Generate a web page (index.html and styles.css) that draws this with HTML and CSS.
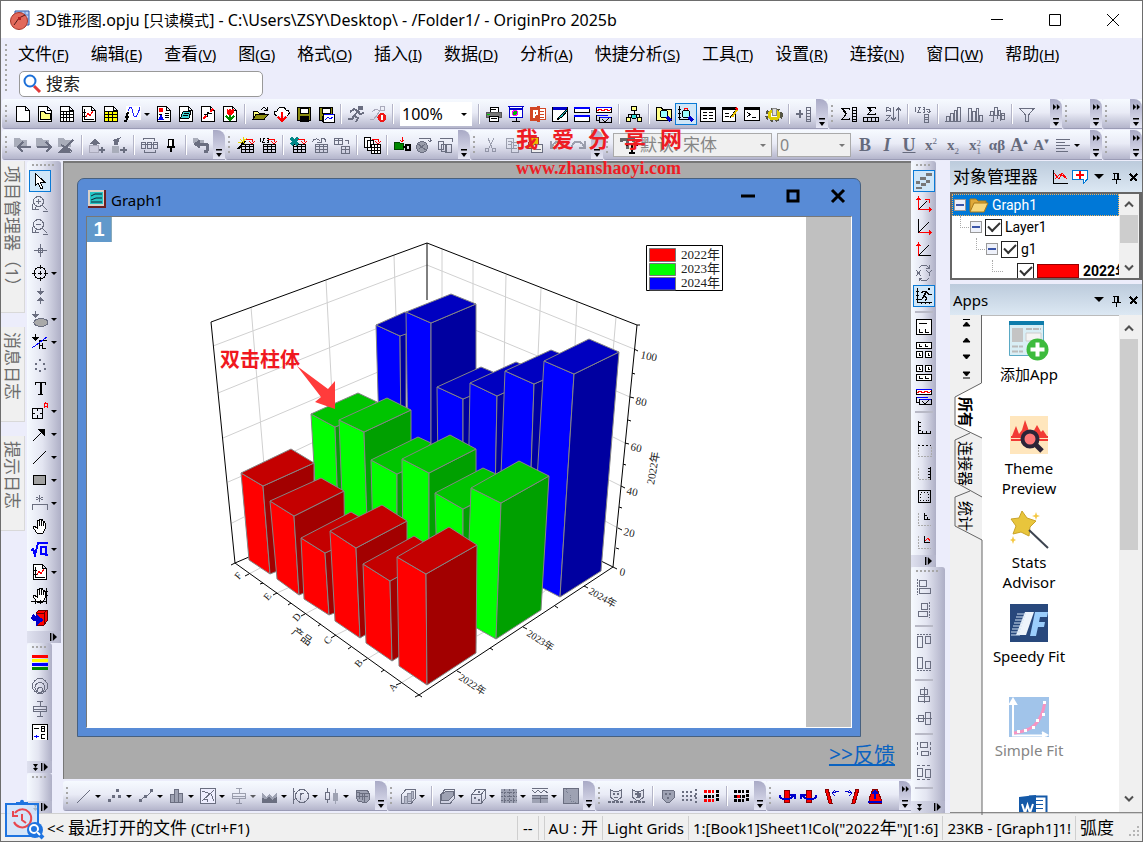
FILE: index.html
```html
<!DOCTYPE html>
<html lang="zh-CN">
<head>
<meta charset="utf-8">
<title>3D锥形图.opju - OriginPro 2025b</title>
<link rel="stylesheet" href="styles.css">
</head>
<body>
<svg class="defs" aria-hidden="true">
<defs>
<symbol id="pg" viewBox="0 0 18 18"><path d="M2.500 1.500H11.500L15.500 5.500V16.500H2.500ZM11.500 1.500V5.500H15.500" fill="#fff"/></symbol>
<symbol id="openp" viewBox="0 0 18 18"><use href="#pg"/><path d="M4.500 14.500V6.500H8.500L9.500 8.500H14.500V14.500Z" fill="#ffff80"/></symbol>
<symbol id="book" viewBox="0 0 18 18"><use href="#pg"/><path d="M2.500 6.500H15.500M2.500 9.500H15.500M2.500 12.500H15.500M5.500 6.500V16M8.500 6.500V16M11.500 6.500V16"/></symbol>
<symbol id="graph" viewBox="0 0 18 18"><use href="#pg"/><path d="M4.500 4V14.500H14M3 7.500H6M3 11.500H6"/><path d="M6 12L8 8L10 11L13 6" stroke="#f00"/></symbol>
<symbol id="matrix" viewBox="0 0 18 18"><use href="#pg"/><path d="M2.500 6.500H15.500V16.500H2.500Z" fill="#ff0"/><path d="M2.500 9.500H15.500M2.500 12.500H15.500M6.500 6.500V16M10.500 6.500V16"/></symbol>
<symbol id="fx" viewBox="0 0 18 18"><path d="M2 1H17V15H2Z" fill="#fff" stroke="none"/><path d="M4 6C6 0 8 2 9 8S13 14 16 2" stroke="#22f"/><path d="M5 8C3 7 3 9 3 11S3 17 0 16M1 11.500H5" stroke-width="2"/></symbol>
<symbol id="layout" viewBox="0 0 18 18"><use href="#pg"/><path d="M4 3H8V7H4Z" fill="#f00" stroke="none"/><path d="M4 14L6 10L8 14Z" fill="#00f" stroke="#00f"/><path d="M10 8.500H14M10 10.500H14M10 12.500H14M4 9.500H7"/></symbol>
<symbol id="notes" viewBox="0 0 18 18"><use href="#pg"/><path d="M6 7L14 6L12 13L3 14Z" fill="#3fd4d4"/><path d="M7 9L12 8M6 11L11 10"/></symbol>
<symbol id="pline" viewBox="0 0 18 18"><use href="#pg"/><path d="M4 14L7 11M11 7L14 4" stroke="#f00" stroke-width="2"/><path d="M5 10L8 9L13 8M8 12V7L11 9"/></symbol>
<symbol id="pflow" viewBox="0 0 18 18"><use href="#pg"/><path d="M6 4L7 6L9 4L11 6L12 4V8L9 10L6 8Z" fill="#f00" stroke="#f00"/><path d="M5 11L9 15L13 11M9 10V15" stroke="#080" stroke-width="2"/></symbol>
<symbol id="folder" viewBox="0 0 18 18"><path d="M2 14V6H6L8 8H13V10" fill="#ffff80"/><path d="M2 14.500L5 9.500H17L13 14.500Z" fill="#8c8c10"/><path d="M10 5C12 2 14 2 16 5M16 2V5H13"/></symbol>
<symbol id="cloud" viewBox="0 0 18 18"><path d="M4 10.500C0 10 0 6 4 6C5 1 12 1 13 5C17 5 17 10 14 10.500" fill="#fff"/><path d="M9 7V15M5 12L9 16L13 12" stroke="#f00" stroke-width="2"/></symbol>
<symbol id="save" viewBox="0 0 18 18"><path d="M2.500 2.500H15.500V15.500H2.500Z" fill="#8c8c10"/><path d="M5 3H13V8H5Z" fill="#fff"/><path d="M5 11H13V16H5Z" fill="#000"/></symbol>
<symbol id="savet" viewBox="0 0 18 18"><use href="#save"/><path d="M6.500 9.500H17.500V17.500H6.500Z" fill="#fff"/><path d="M7 9.500H17" stroke="#00f"/><path d="M8 15L11 12L13 14L16 12" stroke="#00f"/></symbol>
<symbol id="run" viewBox="0 0 18 18"><path d="M3 7L7 4L11 6L7 11L11 13L9 17M11 6L13 9L17 8M7 11L5 14L1 14" stroke-width="2"/><path d="M11 1H15V4H11Z" fill="currentColor"/></symbol>
<symbol id="runx" viewBox="0 0 18 18"><path d="M3 7L7 4L11 6L7 11L10 12M7 11L5 14L1 14M11 1H15V5H11Z" stroke="#aab"/><circle cx="13" cy="12.500" r="4.500" fill="#f01818" stroke="none"/><path d="M13 10V15" stroke="#fff" stroke-width="2"/></symbol>
<symbol id="print" viewBox="0 0 18 18"><path d="M5 7V2H13V7" fill="#fff"/><path d="M1.500 7.500H16.500V12.500H1.500Z" fill="#777" stroke="#555"/><path d="M4.500 11.500H13.500V16.500H4.500Z" fill="#fff"/><path d="M6 4.500H11M6 13.500H12"/><path d="M2 9H5" stroke="#0c0"/></symbol>
<symbol id="slide" viewBox="0 0 18 18"><path d="M1 1.500H17M2.500 2V12.500H15.500V2" stroke="#00c" fill="#fff"/><path d="M2 3.500H16" stroke="#00c" stroke-width="2"/><circle cx="8" cy="8" r="2.500" fill="#0b0" stroke="#f0f"/><path d="M9 13V16M5 16.500H13"/></symbol>
<symbol id="ppt" viewBox="0 0 18 18"><path d="M9 3.500H16.500V14.500H9M11 6H15M11 9H15M11 12H15" fill="#fff" stroke="#d24625"/><path d="M1 2.500L11 1V17L1 15.500Z" fill="#d24625" stroke="none"/><path d="M4.500 13V5.500H6.500C9 5.500 9 9.500 6.500 9.500H5" stroke="#fff" stroke-width="2"/></symbol>
<symbol id="brush" viewBox="0 0 18 18"><path d="M1.500 2.500H16.500V16.500H1.500Z" fill="#fff"/><path d="M2 3H16" stroke="#00c" stroke-width="3"/><path d="M16 4L9 11L6 15L11 12L17 5Z" fill="#2bb"/></symbol>
<symbol id="win2" viewBox="0 0 18 18"><path d="M1.500 2.500H16.500V7.500H1.500ZM1.500 10.500H16.500V16.500H1.500Z" fill="#fff"/><path d="M1 3H17M1 11H17" stroke="#00f" stroke-width="2"/></symbol>
<symbol id="win3" viewBox="0 0 18 18"><path d="M1.500 2.500H16.500V7.500H1.500Z" fill="#fff"/><path d="M1 2H17M1 10H13M5 12.500H17" stroke="#00f"/><path d="M2 6L5 4L8 6L11 4L14 6L16 4" stroke="#f00"/><path d="M1.500 10V15H5M4.500 12V17.500H16.500V12M7 14L10 17L14 13"/></symbol>
<symbol id="org" viewBox="0 0 18 18"><path d="M6.500 1.500H11.500V5.500H6.500ZM1.500 12.500H5.500V16.500H1.500ZM12.500 12.500H16.500V16.500H12.500Z" fill="#ff8"/><path d="M9 6V12M3.500 12V9.500H14.500V12"/><circle cx="9" cy="11.500" r="2.500" fill="#3dd"/></symbol>
<symbol id="lens" viewBox="0 0 18 18"><circle cx="9" cy="9" r="4" fill="#9ff"/><path d="M12 12L16 16" stroke="#00c" stroke-width="3"/></symbol>
<symbol id="find" viewBox="0 0 18 18"><path d="M1.500 15.500V2.500H6L8 4.500H16.500V15.500Z" fill="#ff8"/><use href="#lens"/></symbol>
<symbol id="gfind" viewBox="0 0 18 18"><path d="M2.500 1V14.500H12M1 4.500H4M1 8.500H4M1 12.500H4"/><path d="M5 12L8 3L10 3L12 7" stroke="#f00"/><use href="#lens"/></symbol>
<symbol id="rep" viewBox="0 0 18 18"><path d="M1.500 2.500H16.500V16.500H1.500Z" fill="#fff"/><path d="M1 4H17" stroke-width="2"/><path d="M4 7.500H8M4 10.500H8M4 13.500H8M10 7.500H14M10 10.500H14M10 13.500H14"/></symbol>
<symbol id="repe" viewBox="0 0 18 18"><path d="M1.500 2.500H14.500V16.500H1.500Z" fill="#fff"/><path d="M1 4H15" stroke-width="2"/><path d="M4 8.500H8M4 11.500H8M15 5L9 13"/><path d="M16 5L11 12" stroke="#e8c000" stroke-width="2"/><path d="M15 3L17 5" stroke="#f00" stroke-width="2"/></symbol>
<symbol id="cmd" viewBox="0 0 18 18"><path d="M1.500 2.500H16.500V15.500H1.500Z" fill="#fff"/><path d="M1 4H17" stroke-width="2"/><path d="M4 7L7 9.500L4 12M9 12.500H13"/></symbol>
<symbol id="gear" viewBox="0 0 18 18"><ellipse cx="9" cy="10" rx="7" ry="5" stroke-width="4" stroke="#554" stroke-dasharray="3 2"/><ellipse cx="9" cy="10" rx="5" ry="4" fill="#fff" stroke="#dc0" stroke-width="3"/><path d="M7 3H11V10H7Z" fill="#ddd" stroke="#888"/></symbol>
<symbol id="addc" viewBox="0 0 18 18"><path d="M1 9H8M4.500 5V13" stroke-width="2"/><path d="M11.500 2.500H15.500V16.500H11.500ZM11.500 5.500H15.500M11.500 8.500H15.500M11.500 11.500H15.500M11.500 14H15.500"/></symbol>
<symbol id="sumc" viewBox="0 0 18 18"><path d="M9 5V3.500H2L6 9L2 14.500H9V13"/><path d="M3 4L6 9" stroke-width="2"/><path d="M12.500 2.500H16.500V16.500H12.500ZM12.500 5.500H16.500M12.500 8.500H16.500M12.500 11.500H16.500M12.500 14H16.500"/></symbol>
<symbol id="sumr" viewBox="0 0 18 18"><path d="M13 4V2.500H6L9 6L6 9.500H13V8"/><path d="M7 3L9 6" stroke-width="2"/><path d="M1.500 12.500H16.500V16.500H1.500ZM5 12.500V16M9 12.500V16M13 12.500V16"/></symbol>
<symbol id="sort" viewBox="0 0 18 18"><path d="M2 7V3.500L4 2L6 3.500V7M2 5.500H6M2 10.500H6L2 15.500H6"/><path d="M9.500 2V15M7 12L9.500 15.500L12 12M14.500 16V3M12 6L14.500 2.500L17 6"/></symbol>
<symbol id="n123" viewBox="0 0 18 18"><path d="M1.500 2V7M4 2.500H6L4 7H6.500M8.500 2.500H10.500V7H8.500M8.500 4.500H10M12 4.500H15V7M13 6L15 8L17 6"/><path d="M10.500 9.500H14.500V17H10.500ZM10.500 12H14.500M10.500 14.500H14.500"/></symbol>
<symbol id="h1" viewBox="0 0 18 18"><path d="M1 16.500H17M2.500 16V11.500H5.500V16M6.500 16V8.500H9V16M10.500 16V5.500H12.500V16M13.500 16V2.500H16.500V16"/></symbol>
<symbol id="h2" viewBox="0 0 18 18"><path d="M1 16.500H17M2.500 16V3.500H5.500V16M6.500 16V6.500H9V16M10.500 16V3.500H12.500V16M13.500 16V10.500H16.500V16"/></symbol>
<symbol id="h3" viewBox="0 0 18 18"><path d="M1 10.500H17M2.500 10V6.500H5V16H3M6.500 10V2.500H9V14M10.500 10V5.500H12.500V16M13.500 8.500H16.500V14H13.500V8"/></symbol>
<symbol id="filt" viewBox="0 0 18 18"><path d="M2 3.500H16L10.500 10V16H7.500V10Z"/></symbol>
<symbol id="fl" viewBox="0 0 18 18"><path d="M0 2H6L7 4H13V11H0Z" fill="#a9adba" stroke="none"/><path d="M17 11H5M9 6L4 11L9 16" stroke-width="2"/></symbol>
<symbol id="fr" viewBox="0 0 18 18"><path d="M0 2H6L7 4H13V11H0Z" fill="#a9adba" stroke="none"/><path d="M1 11H14M10 6L15 11L10 16" stroke-width="2"/></symbol>
<symbol id="fu" viewBox="0 0 18 18"><path d="M0 2H6L7 4H13V11H0Z" fill="#a9adba" stroke="none"/><path d="M3 9L14 15M15 4L5 14" stroke-width="2"/><path d="M1 16H12L7 11Z" fill="currentColor"/></symbol>
<symbol id="up" viewBox="0 0 18 18"><path d="M2 8L7 2L12 8H9V9H5V8Z" fill="currentColor" stroke="none"/><path d="M1.500 9.500H10.500V16.500H1.500Z" fill="#ccd" stroke="#aab"/><path d="M11 14H17M14 11V17" stroke-width="2"/></symbol>
<symbol id="dn" viewBox="0 0 18 18"><path d="M3 4L11 1L9 4L8 9H4V6Z" fill="currentColor" stroke="none"/><path d="M2 10H9V17H2Z" fill="#a9adba" stroke="none"/><path d="M10 14H17M13.500 11V17" stroke-width="2"/></symbol>
<symbol id="cyc" viewBox="0 0 18 18"><path d="M1.500 6.500H5.500V12.500H1.500ZM7.500 6.500H11.500V12.500H7.500ZM13.500 6.500H17V12.500H13.500ZM1 8.500H17M3 4V2.500H14V5M15 14V16.500H4V14"/></symbol>
<symbol id="pin" viewBox="0 0 18 18"><path d="M6.500 3.500H11.500V10H6.500Z" fill="#fff"/><path d="M11 3V10M5 10.500H13M9 11V16" stroke-width="2"/></symbol>
<symbol id="back" viewBox="0 0 18 18"><path d="M1 2H6L7 4H12V7H1Z" fill="#a9adba" stroke="none"/><path d="M5 8H13Q16 8 16 12T12 16M8 5L4 8L8 11" stroke-width="3"/></symbol>
<symbol id="tbl" viewBox="0 0 18 18"><path d="M4.500 8.500H16.500V16.500H4.500ZM4 10.500H17M4 13.500H17M8.500 8V17M12.500 8V17"/></symbol>
<symbol id="ra" viewBox="0 0 18 18"><path d="M9 3.500H15V6M12 5L15 8L18 5" stroke="#f00"/></symbol>
<symbol id="wiz" viewBox="0 0 18 18"><path d="M1 13L8 5" stroke-width="2"/><path d="M3 3L8 8M10 2L4 7M6 1V5M1 6H5" stroke="#e6d800"/><use href="#tbl"/><use href="#ra"/></symbol>
<symbol id="imp" viewBox="0 0 18 18"><path d="M1.500 2V6M3.500 2.500H5.500L3.500 6H6M7.500 2.500H9.500V6H7.500M8 4H9"/><use href="#tbl"/><use href="#ra"/></symbol>
<symbol id="xls" viewBox="0 0 18 18"><use href="#tbl"/><path d="M2 2L9 9M9 2L2 9" stroke="#088" stroke-width="3"/><use href="#ra"/></symbol>
<symbol id="rei" viewBox="0 0 18 18"><use href="#tbl"/><path d="M1 6C3 2 7 2 9 5M6 6H10V3M10 3C13 2 15 3 15 6"/></symbol>
<symbol id="rej" viewBox="0 0 18 18"><path d="M1.500 2.500H9.500V8.500H1.500ZM1 4.500H10M5.500 2V8M12 4.500H15V8M8.500 10.500H16.500V17H8.500ZM8 13.500H17M12.500 10V17"/></symbol>
<symbol id="dup" viewBox="0 0 18 18"><path d="M1.500 1.500H7.500V11.500H1.500ZM4.500 4.500H10.500V14H4.500Z" fill="#fff"/><path d="M8.500 8.500H17V17H8.500ZM8 11.500H17M8 14.500H17M11.500 8V17M14.500 8V17" fill="#fff"/><use href="#ra"/></symbol>
<symbol id="plug" viewBox="0 0 18 18"><path d="M1 6H6L7 7H10V13H1Z" fill="#080" stroke="#040"/><path d="M9 1V6M7 4L9 6L11 4" stroke="#f00"/><path d="M10 11H13V9H17V14H13V12" stroke-width="2"/></symbol>
<symbol id="conn" viewBox="0 0 18 18"><circle cx="7" cy="11" r="5.500" fill="#999dab"/><path d="M3 8L11 14M4 13L10 8M4 2.500H15V6M13 4L15 6L17 4"/></symbol>
<symbol id="cpy" viewBox="0 0 18 18"><path d="M1.500 5.500H6.500V13H1.500ZM4.500 8.500H9.500V15H4.500ZM8.500 8.500H14V16.500H8.500ZM3 2.500H15V6"/></symbol>
<symbol id="cut" viewBox="0 0 18 18"><path d="M6 2L10 12M12 2L7 12"/><circle cx="5" cy="14" r="2"/><circle cx="12" cy="14" r="2"/></symbol>
<symbol id="cp2" viewBox="0 0 18 18"><path d="M2.500 2.500H9.500V12.500H2.500ZM7.500 6.500H14.500V16.500H7.500ZM4 5.500H8M4 8.500H7M9 9.500H13M9 12.500H13" fill="#dfe2ee"/></symbol>
<symbol id="pst" viewBox="0 0 18 18"><path d="M4 1L12 1L13 12H2Z" fill="#e8c000" stroke="#a33"/><path d="M5 13L9 8H16V16H5Z" fill="#eee"/><path d="M8 13.500H15"/></symbol>
<symbol id="redo" viewBox="0 0 18 18"><path d="M2 12C2 4 12 4 14 11M15 5V12H9" stroke-width="2"/></symbol>
<symbol id="undo" viewBox="0 0 18 18"><path d="M16 12C16 4 6 4 4 11M3 5V12H9" stroke-width="2"/></symbol>
<symbol id="tf" viewBox="0 0 18 18"><path d="M1 6V3H13V6M7 3V13" stroke-width="3" stroke="#666"/><path d="M7 10V7.500H17V10M12 8V17M9 17H15" stroke-width="2"/></symbol>
<symbol id="aln" viewBox="0 0 18 18"><path d="M2 3.500H16M2 6.500H11M2 9.500H16M2 12.500H11M2 15.500H14"/></symbol>
<symbol id="arrow" viewBox="0 0 18 18"><path d="M4 1V14L7 11L10 17L12 16L9.500 10.500H14Z" fill="#fff"/></symbol>
<symbol id="zin" viewBox="0 0 18 18"><circle cx="7.500" cy="6.500" r="5"/><path d="M5 6.500H10M7.500 4V9M11 10L16 15M1.500 9V14.500H8M4 12V14M12 16.500H17"/></symbol>
<symbol id="zout" viewBox="0 0 18 18"><circle cx="7.500" cy="6.500" r="5"/><path d="M5 6.500H10M11 10L16 15M1.500 9V14.500H8M4 12V14M12 16.500H17"/></symbol>
<symbol id="plus" viewBox="0 0 18 18"><path d="M9.500 3V16M3 9.500H16M7.500 7.500H11.500V11.500H7.500Z"/></symbol>
<symbol id="target" viewBox="0 0 18 18"><circle cx="9" cy="9" r="6"/><path d="M9 1V5M9 13V17M1 9H5M13 9H17M7 9H11M9 7V11"/></symbol>
<symbol id="ud" viewBox="0 0 18 18"><path d="M9.500 1V5M9.500 13V17"/><path d="M6 4H13L9.500 8ZM6 14H13L9.500 10Z" fill="currentColor" stroke="none"/></symbol>
<symbol id="mask" viewBox="0 0 18 18"><ellipse cx="10" cy="12.500" rx="7" ry="4" fill="#a9a9a9"/><path d="M4.500 1V5" /><path d="M1 4H8L4.500 8Z" fill="currentColor" stroke="none"/></symbol>
<symbol id="draw" viewBox="0 0 18 18"><path d="M4.500 1V5"/><path d="M1 4H8L4.500 8Z" fill="#000" stroke="none"/><path d="M8.500 16V7.500H16M11.500 10V15.500H15M8 12.500H11"/><path d="M1 15L16 4" stroke="#00f"/></symbol>
<symbol id="dots" viewBox="0 0 18 18"><path d="M8 3H10V5H8ZM4 7H6V9H4ZM12 7H14V9H12ZM4 12H6V14H4ZM8 14H10V16H8ZM13 12H15V14H13Z" fill="currentColor" stroke="none"/></symbol>
<symbol id="tt" viewBox="0 0 18 18"><path d="M4.500 6V3.500H14.500V6M7 15.500H12"/><path d="M9.500 3V16" stroke-width="2"/></symbol>
<symbol id="ann" viewBox="0 0 18 18"><path d="M1.500 6.500H11.500V16.500H1.500ZM6.500 6V9M6.500 13V17M1 11.500H4M9 11.500H12"/><path d="M13.500 6V2L14.500 1L16.500 2V6M13 4.500H16" stroke="#f00"/></symbol>
<symbol id="arr" viewBox="0 0 18 18"><path d="M2 16L11 7"/><path d="M13 4V10L7 4Z" fill="#000"/></symbol>
<symbol id="line" viewBox="0 0 18 18"><path d="M2 16L15 3"/></symbol>
<symbol id="rect" viewBox="0 0 18 18"><path d="M2.500 4.500H14.500V13.500H2.500Z" fill="#a0a0a0"/></symbol>
<symbol id="brk" viewBox="0 0 18 18"><path d="M1.500 16V10.500H16.500V16M8.500 1V8M5 3L12 6M12 3L5 6"/></symbol>
<symbol id="hand" viewBox="0 0 18 18"><path d="M5 15L2 10L3 9L6 11V4Q7 3 8 4V9V3Q9 1 10 3V9V3Q12 2 12 4V9V5Q14 4 14 6V12L12 16H6Z" fill="#fff"/></symbol>
<symbol id="sqrt" viewBox="0 0 18 18"><path d="M0 10L2 9L4 15L7 3H17M15 7H10V14H14M15 6V15H17" stroke="#00f" stroke-width="2"/></symbol>
<symbol id="hand2" viewBox="0 0 18 18"><use href="#hand"/><path d="M0 15.500H16M15.500 2V18M4 14V18M9 14V18M14 5.500H17M14 9.500H17"/></symbol>
<symbol id="rot" viewBox="0 0 18 18"><path d="M5 4L8 1H16V12L13 16H5Z" fill="#f00" stroke="#600"/><path d="M5 4H13V16M13 4L16 1" stroke="#600"/><path d="M3 6C-1 10 3 12 8 11M6 7L11 11L6 15Z" stroke="#00c" fill="#00c" stroke-width="2"/></symbol>
<symbol id="cols" viewBox="0 0 18 18"><path d="M1 2.500H17" stroke="#f00" stroke-width="3"/><path d="M1 6.500H17" stroke="#ff0" stroke-width="3"/><path d="M1 10.500H17" stroke="#00f" stroke-width="3"/><path d="M1 14.500H17" stroke="#080" stroke-width="3"/></symbol>
<symbol id="rings" viewBox="0 0 18 18"><circle cx="9" cy="9" r="7.500"/><circle cx="9" cy="10.500" r="5"/><circle cx="9" cy="13" r="2.500"/></symbol>
<symbol id="err" viewBox="0 0 18 18"><path d="M6 1.500H12M9 2V6M2.500 6.500H15.500V11.500H2.500ZM2 9.500H16M9 12V16M6 16.500H12"/></symbol>
<symbol id="lbl" viewBox="0 0 18 18"><path d="M1.500 17V1.500H16.500V17" fill="#fff"/><path d="M3 5.500H8M10.500 3V8.500H13.500V3.500H10.500M10.500 5.500H13M14 11.500H10.500V15.500H14"/><path d="M3 13.500H8M5.500 12V15" stroke="#00f"/></symbol>
<symbol id="steps" viewBox="0 0 18 18"><path d="M1 9H5V12H1ZM5 5H11V8H5ZM11 1H17V4H11ZM11 8H15V11H11ZM6 11H11V14H6ZM1 15H7V17H1Z" fill="#777" stroke="none"/></symbol>
<symbol id="ax1" viewBox="0 0 18 18"><path d="M4 14L12 6"/><path d="M3.500 3V14.500H15M10 4H14V8" stroke="#f00"/><path d="M1 5L3.500 1L6 5ZM14 12V17L17 14.500Z" fill="#f00" stroke="none"/></symbol>
<symbol id="ax2" viewBox="0 0 18 18"><path d="M3.500 1V14.500M3.500 14.500L14 4"/><path d="M4 14.500H15" stroke="#f00"/><path d="M14 12V17L17 14.500Z" stroke="none" fill="#f00"/></symbol>
<symbol id="ax3" viewBox="0 0 18 18"><path d="M3.500 14.500H16M3.500 14.500L14 4"/><path d="M3.500 15V2" stroke="#f00"/><path d="M1 5L3.500 1L6 5Z" stroke="none" fill="#f00"/></symbol>
<symbol id="xy" viewBox="0 0 18 18"><path d="M1 6L6 12M6 6L1 12M11 6L14 9L17 6M14 9V12M4 4C7 0 12 1 14 4M11 4H14V1M14 14C11 18 6 17 4 14M7 14H4V17"/></symbol>
<symbol id="jog" viewBox="0 0 18 18"><path d="M2.500 1V15.500H17M1 4.500H4M1 8.500H4M1 12.500H4M6 15V17M10 15V17M14 15V17"/><path d="M6 6L9 4L12 5L9 9L12 11L10 14M12 5L14 8L17 7M9 9L7 12H4"/><path d="M11 5L9 9M13 2H15" stroke-width="2"/></symbol>
<symbol id="l1" viewBox="0 0 18 18"><path d="M1.500 1.500H16.500V16.500H1.500Z" fill="#fff"/><path d="M4 5.500H12M4.500 11V14.500H8M10.500 11V14.500H14"/></symbol>
<symbol id="l2" viewBox="0 0 18 18"><path d="M1.500 1.500H16.500V7.500H1.500ZM1.500 10.500H7.500V16.500H1.500ZM10.500 10.500H16.500V16.500H10.500Z" fill="#fff"/><path d="M4.500 3V5.500H7M10.500 3V5.500H13M4.500 12V14.500H6M13.500 12V14.500H15"/></symbol>
<symbol id="l3" viewBox="0 0 18 18"><path d="M1.500 1.500H7.500V7.500H1.500ZM10.500 1.500H16.500V7.500H10.500ZM1.500 10.500H16.500V16.500H1.500Z" fill="#fff"/><path d="M4.500 3V5.500H6M13.500 3V5.500H15M4.500 12V14.500H8M10.500 12V14.500H14"/></symbol>
<symbol id="e1" viewBox="0 0 18 18"><path d="M3.500 3V15.500H16M3 4.500H6M3 8.500H6M3 12.500H6M7.500 13V15M11.500 13V15M15.500 13V15"/></symbol>
<symbol id="e2" viewBox="0 0 18 18"><path d="M3.500 3V15.500H16V5" stroke="#aaa" stroke-dasharray="2 1"/><path d="M3 4.500H16" stroke-dasharray="2 2"/></symbol>
<symbol id="e3" viewBox="0 0 18 18"><path d="M15 15.500H3.500V4" stroke="#aaa" stroke-dasharray="2 1"/><path d="M15.500 3V16M13 4.500H16M13 7.500H16M13 10.500H16M13 13.500H16"/></symbol>
<symbol id="e4" viewBox="0 0 18 18"><path d="M3.500 3.500H15.500V15.500H3.500Z"/><path d="M5.500 5.500H13.500V13.500H5.500Z" stroke-dasharray="1 2"/></symbol>
<symbol id="e5" viewBox="0 0 18 18"><path d="M3.500 3V15.500H16" stroke="#aaa" stroke-dasharray="2 1"/><path d="M9.500 3V9.500H15M9 5.500H12M12.500 7V10"/></symbol>
<symbol id="e6" viewBox="0 0 18 18"><path d="M3.500 3V15.500H16" stroke="#aaa" stroke-dasharray="2 1"/><path d="M9.500 3V9.500H15"/><path d="M10 8L13 5L15 8" stroke="#f00"/></symbol>
<symbol id="a1" viewBox="0 0 18 18"><path d="M2.500 1V17" stroke-dasharray="2 1"/><path d="M4.500 2.500H11.500V8.500H4.500ZM4.500 10.500H15.500V15.500H4.500Z"/></symbol>
<symbol id="a2" viewBox="0 0 18 18"><path d="M14.500 1V17" stroke-dasharray="2 1"/><path d="M6.500 2.500H12.500V8.500H6.500ZM3.500 10.500H12.500V15.500H3.500Z"/></symbol>
<symbol id="a3" viewBox="0 0 18 18"><path d="M2 2.500H16" stroke-dasharray="2 1"/><path d="M2.500 4.500H7.500V15.500H2.500ZM10.500 4.500H15.500V11.500H10.500Z"/></symbol>
<symbol id="a4" viewBox="0 0 18 18"><path d="M2 15.500H16" stroke-dasharray="2 1"/><path d="M2.500 2.500H7.500V13.500H2.500ZM10.500 6.500H15.500V13.500H10.500Z"/></symbol>
<symbol id="a5" viewBox="0 0 18 18"><path d="M9.500 1V17M5.500 3.500H12.500V8.500H5.500ZM3.500 10.500H14.500V15.500H3.500Z"/></symbol>
<symbol id="a6" viewBox="0 0 18 18"><path d="M1 9.500H17M3.500 6.500H8.500V12.500H3.500ZM10.500 3.500H15.500V15.500H10.500Z"/></symbol>
<symbol id="a7" viewBox="0 0 18 18"><path d="M2.500 2V16M15.500 2V16" stroke-dasharray="3 2"/><path d="M5.500 2.500H12.500V7.500H5.500ZM6.500 11.500H13.500V15.500H6.500Z"/></symbol>
<symbol id="a8" viewBox="0 0 18 18"><path d="M2 2.500H16M2 16.500H16" stroke-dasharray="3 2"/><path d="M2.500 5.500H7.500V13.500H2.500ZM10.500 6.500H15.500V14.500H10.500Z"/></symbol>
<symbol id="scat" viewBox="0 0 18 18"><path d="M2 12H5V15H2ZM6 8H9V11H6ZM12 8H15V11H12ZM10 2H13V5H10Z" fill="currentColor" stroke="none"/></symbol>
<symbol id="lsc" viewBox="0 0 18 18"><path d="M3 14L8 9H10L15 4"/><path d="M2 12H5V15H2ZM7 8H10V11H7ZM13 2H16V5H13Z" fill="currentColor" stroke="none"/></symbol>
<symbol id="bars" viewBox="0 0 18 18"><path d="M2.500 15.500V7.500H6.500V15.500ZM6.500 15.500V2.500H10.500V15.500ZM10.500 15.500V6.500H14.500V15.500Z" fill="#9ea2b3"/></symbol>
<symbol id="gx" viewBox="0 0 18 18"><path d="M1.500 1.500H16.500V16.500H1.500ZM3 14L15 3M3 4L12 7L15 14M5 12H8V15" fill="#eef"/></symbol>
<symbol id="area" viewBox="0 0 18 18"><path d="M1 6L5 10L8 7L11 10L16 5V15H1Z" fill="#9ea2b3" stroke="none"/><path d="M1 11L5 12L8 10L11 13L16 10V16H1Z" fill="currentColor" stroke="none"/></symbol>
<symbol id="pol" viewBox="0 0 18 18"><path d="M1.500 1V17M1 4.500H3M1 12.500H3"/><circle cx="10" cy="9" r="6.500"/><path d="M8.500 13V6M8.500 8L10 6.500H12"/></symbol>
<symbol id="box" viewBox="0 0 18 18"><path d="M4.500 1V5M4.500 12V16M2.500 5.500H6.500V12H2.500Z"/><path d="M12.500 2V6M12.500 13V17M10.500 6.500H14.500V13H10.500Z" fill="#9ea2b3" stroke="#9ea2b3"/></symbol>
<symbol id="cube" viewBox="0 0 18 18"><path d="M2.500 7.500L7 2.500H16.500V11.500L12 16.500H2.500Z"/><path d="M5 9H8V16H5ZM8 6H12V14H8ZM12 4H14V11H12Z" fill="#b4b8c8" stroke="#8a8ea0"/></symbol>
<symbol id="cubp" viewBox="0 0 18 18"><path d="M2.500 7.500L7 2.500H16.500V11.500L12 16.500H2.500ZM2.500 7.500H12V16M12 7.500L16 3"/><path d="M5 10H7V12H5ZM9 12H11V14H9ZM9 4H11V6H9Z" fill="currentColor" stroke="none"/></symbol>
<symbol id="cubf" viewBox="0 0 18 18"><path d="M2.500 7.500L7 2.500H16.500V11.500L12 16.500H2.500Z"/><path d="M3 8L8 4L16 4L15 9L11 13H3Z" fill="#9ea2b3"/></symbol>
<symbol id="film" viewBox="0 0 18 18"><path d="M2 3H13L15 6V13L12 16L4 14L2 10Z" fill="#9ea2b3"/><path d="M3 5L8 7V13M8 7L15 6M5 5V12M10 7V15M3 9H14"/></symbol>
<symbol id="mesh" viewBox="0 0 18 18"><path d="M1 2H17V16H1Z" fill="#9ea2b3" stroke="none"/><path d="M1 5.500H17M1 9.500H17M1 13.500H17M4.500 2V16M9.500 2V16M13.500 2V16" stroke-dasharray="2 1"/></symbol>
<symbol id="hm" viewBox="0 0 18 18"><path d="M1 1.500H17M1 3L4 6L7 3L10 6L13 3L17 6"/><path d="M1 8H17V16H1Z" fill="#9ea2b3" stroke="none"/><path d="M1 8.500H17M1 11.500H17M9 8V16"/></symbol>
<symbol id="cont" viewBox="0 0 18 18"><path d="M1.500 1.500H16.500V16.500H1.500Z" fill="#9ea2b3"/><path d="M4 2V5L8 8L9 14L15 16" stroke="#7a8093" stroke-dasharray="1 1"/></symbol>
<symbol id="msk" viewBox="0 0 18 18"><path d="M3.500 2.500L6 4H12L14.500 2.500V10L11 13H7L3.500 10Z" fill="#dfe1ec"/><path d="M6 7H8M10 7H12" stroke-width="2"/><path d="M7 10.500H11"/><path d="M1 15H17" stroke-width="2" stroke-dasharray="3 1"/></symbol>
<symbol id="msk2" viewBox="0 0 18 18"><use href="#msk"/><path d="M9 5V9H12" stroke-width="2"/></symbol>
<symbol id="shd" viewBox="0 0 18 18"><path d="M3 4L6 3H12L15 4V11L11 15H7L3 11Z" fill="#9ea2b3"/><path d="M6 7H8M10 7H12M8 11H10" stroke-width="2"/></symbol>
<symbol id="dgr" viewBox="0 0 18 18"><path d="M1 4.500H13M1 8.500H17M1 12.500H13" stroke-dasharray="2 2" stroke-width="2"/><path d="M15 2V16" stroke-dasharray="2 2" stroke-width="2"/></symbol>
<symbol id="dgr2" viewBox="0 0 18 18"><path d="M1 4.500H11M1 13.500H11" stroke="#f00" stroke-dasharray="3 1" stroke-width="3"/><path d="M1 9H11" stroke-dasharray="3 1" stroke-width="3"/><path d="M14.500 3V15" stroke-dasharray="3 1" stroke-width="3"/></symbol>
<symbol id="dgr3" viewBox="0 0 18 18"><path d="M1 4.500H11M1 9H13M1 13.500H11" stroke-dasharray="3 1" stroke-width="3"/><path d="M14.500 3V15" stroke-dasharray="3 1" stroke-width="3"/><path d="M4 9H7" stroke="#f00" stroke-width="3"/></symbol>
<symbol id="r1" viewBox="0 0 18 18"><path d="M6.500 3.500H11.500V15.500H6.500Z" fill="#f00" stroke="#800"/><path d="M2 8C0 13 12 14 15 9M12 8H17V12" stroke="#00c" stroke-width="2"/></symbol>
<symbol id="r2" viewBox="0 0 18 18"><path d="M6.500 3.500H11.500V15.500H6.500Z" fill="#f00" stroke="#800"/><path d="M16 8C18 13 6 14 3 9M6 8H1V12" stroke="#00c" stroke-width="2"/></symbol>
<symbol id="r3" viewBox="0 0 18 18"><path d="M3 2H6L10 16H7Z" fill="#f00" stroke="#800"/><path d="M17 4L10 6M13 3L10 6L13 9" stroke="#00c"/></symbol>
<symbol id="r4" viewBox="0 0 18 18"><path d="M12 2H15L11 16H8Z" fill="#f00" stroke="#800"/><path d="M1 4L8 6M5 3L8 6L5 9" stroke="#00c"/></symbol>
<symbol id="r5" viewBox="0 0 18 18"><path d="M7 2H11L15 12V16H3V12Z" fill="#f00" stroke="#800"/><path d="M9 4V12M6 7L9 4L12 7M2 15H16" stroke="#00c" stroke-width="2"/></symbol>
<symbol id="pn" viewBox="0 0 18 18"><path d="M6 5.500H12M7.500 6V11M5 11.500H14M9.500 12V16"/><path d="M11 5V11" stroke-width="2"/></symbol>
<symbol id="x" viewBox="0 0 18 18"><path d="M6 6L13 13M13 6L6 13" stroke-width="2"/></symbol>
<symbol id="chev" viewBox="0 0 18 18"><path d="M5 11.500L9 7.500L13 11.500" stroke="#505050" stroke-width="2"/></symbol>
</defs>
</svg>

<div class="app">
<header class="title">
  <svg class="logo" viewBox="0 0 20 20"><path d="M5 1H19V15H5Z" fill="#b9d0f5" stroke="#2c56a8"/><path d="M5 5H19M5 9H19M11 1V15M15 1V15" stroke="#5a80c8"/><circle cx="9" cy="11" r="8.500" fill="#e2695c" stroke="#a83228"/><path d="M4 15L9 8L15 5" fill="none" stroke="#501818"/><path d="M8 7H11V10H8Z" fill="#b02020"/></svg>
  <h1>3D<span>锥形图</span>.opju [<span>只读模式</span>] - C:\Users\ZSY\Desktop\ - /Folder1/ - OriginPro 2025b</h1>
  <div class="winbtns">
    <button aria-label="最小化"><svg viewBox="0 0 14 14"><path d="M1 6.500H13"/></svg></button>
    <button aria-label="最大化"><svg viewBox="0 0 14 14"><path d="M1.500 1.500H12.500V12.500H1.500Z"/></svg></button>
    <button aria-label="关闭"><svg viewBox="0 0 14 14"><path d="M1 1L13 13M13 1L1 13"/></svg></button>
  </div>
</header>

<div class="menuarea">
  <i class="grip v"></i>
  <div>
  <nav class="menu">
    <button>文件<small>(<u>F</u>)</small></button><button>编辑<small>(<u>E</u>)</small></button><button>查看<small>(<u>V</u>)</small></button><button>图<small>(<u>G</u>)</small></button><button>格式<small>(<u>O</u>)</small></button><button>插入<small>(<u>I</u>)</small></button><button>数据<small>(<u>D</u>)</small></button><button>分析<small>(<u>A</u>)</small></button><button>快捷分析<small>(<u>S</u>)</small></button><button>工具<small>(<u>T</u>)</small></button><button>设置<small>(<u>R</u>)</small></button><button>连接<small>(<u>N</u>)</small></button><button>窗口<small>(<u>W</u>)</small></button><button>帮助<small>(<u>H</u>)</small></button>
  </nav>
  <label class="search"><svg viewBox="0 0 20 20"><path d="M12 12L18 18" stroke="#e03a3a" stroke-width="3"/><circle cx="8" cy="7" r="5.500" fill="#fff" stroke="#1c6fd8" stroke-width="2"/></svg><input type="text" placeholder="搜索" aria-label="搜索"></label>
  </div>
</div>

<div class="row">
  <div class="bar"><i class="grip v"></i>
    <button class="b" title="新建项目"><svg><use href="#pg"/></svg></button><button class="b" title="新建文件夹"><svg><use href="#openp"/></svg></button><button class="b" title="新建工作簿"><svg><use href="#book"/></svg></button><button class="b" title="新建图"><svg><use href="#graph"/></svg></button><button class="b" title="新建矩阵"><svg><use href="#matrix"/></svg></button><button class="b dd" title="新建函数"><svg><use href="#fx"/></svg></button><button class="b" title="新建布局"><svg><use href="#layout"/></svg></button><button class="b" title="新建备注"><svg><use href="#notes"/></svg></button><button class="b" title="模板"><svg><use href="#pline"/></svg></button><button class="b" title="新建图像"><svg><use href="#pflow"/></svg></button><i class="sep"></i>
    <button class="b" title="打开"><svg><use href="#folder"/></svg></button><button class="b" title="云"><svg><use href="#cloud"/></svg></button><button class="b" title="保存"><svg><use href="#save"/></svg></button><button class="b" title="保存模板"><svg><use href="#savet"/></svg></button><i class="sep"></i>
    <button class="b d" title="重新计算"><svg><use href="#run"/></svg></button><button class="b d" title="停止"><svg><use href="#runx"/></svg></button><i class="sep"></i>
    <span class="combo zoom"><select aria-label="缩放"><option>100%</option></select></span><i class="sep"></i>
    <button class="b" title="打印"><svg><use href="#print"/></svg></button><button class="b" title="幻灯片"><svg><use href="#slide"/></svg></button><button class="b" title="PowerPoint"><svg><use href="#ppt"/></svg></button><button class="b" title="画笔"><svg><use href="#brush"/></svg></button><button class="b" title="排列"><svg><use href="#win2"/></svg></button><button class="b" title="窗口"><svg><use href="#win3"/></svg></button><i class="sep"></i>
    <button class="b" title="组织"><svg><use href="#org"/></svg></button><i class="sep"></i>
    <button class="b" title="查找"><svg><use href="#find"/></svg></button><button class="b on" title="对象管理器"><svg><use href="#gfind"/></svg></button><button class="b" title="结果"><svg><use href="#rep"/></svg></button><button class="b" title="脚本"><svg><use href="#repe"/></svg></button><button class="b" title="命令"><svg><use href="#cmd"/></svg></button><button class="b" title="代码"><svg><use href="#gear"/></svg></button><i class="sep"></i>
    <button class="b d" title="添加列"><svg><use href="#addc"/></svg></button><i class="cap"></i>
  </div>
  <div class="bar grow"><i class="grip v"></i>
    <button class="b" title="列统计"><svg><use href="#sumc"/></svg></button><button class="b" title="行统计"><svg><use href="#sumr"/></svg></button><button class="b d" title="排序"><svg><use href="#sort"/></svg></button><i class="sep"></i><button class="b d" title="编号"><svg><use href="#n123"/></svg></button><i class="sep"></i><button class="b d" title="直方图"><svg><use href="#h1"/></svg></button><button class="b d" title="柱状"><svg><use href="#h2"/></svg></button><button class="b d" title="分布"><svg><use href="#h3"/></svg></button><i class="sep"></i><button class="b d" title="筛选"><svg><use href="#filt"/></svg></button><i class="fill"></i><i class="cap more"></i>
  </div>
  <div class="bar mini"><i class="grip v"></i><i class="fill"></i><i class="cap more"></i></div>
  <div class="bar mini"><i class="grip v"></i><i class="fill"></i><i class="cap more"></i></div>
</div>

<div class="row">
  <div class="bar"><i class="grip v"></i>
    <button class="b d" title="后退"><svg><use href="#fl"/></svg></button><button class="b d" title="前进"><svg><use href="#fr"/></svg></button><button class="b d" title="上级"><svg><use href="#fu"/></svg></button><i class="sep"></i><button class="b d" title="上移"><svg><use href="#up"/></svg></button><button class="b d" title="下移"><svg><use href="#dn"/></svg></button><i class="sep"></i><button class="b d" title="循环"><svg><use href="#cyc"/></svg></button><button class="b" title="固定"><svg><use href="#pin"/></svg></button><i class="sep"></i><button class="b d" title="返回"><svg><use href="#back"/></svg></button><i class="cap"></i>
  </div>
  <div class="bar"><i class="grip v"></i>
    <button class="b" title="导入向导"><svg><use href="#wiz"/></svg></button><button class="b" title="导入ASCII"><svg><use href="#imp"/></svg></button><i class="sep"></i><button class="b" title="导入Excel"><svg><use href="#xls"/></svg></button><button class="b d" title="重新导入"><svg><use href="#rei"/></svg></button><button class="b d" title="转置"><svg><use href="#rej"/></svg></button><i class="sep"></i><button class="b" title="批处理"><svg><use href="#dup"/></svg></button><i class="sep"></i><button class="b" title="连接数据"><svg><use href="#plug"/></svg></button><button class="b d" title="网络"><svg><use href="#conn"/></svg></button><button class="b d" title="克隆"><svg><use href="#cpy"/></svg></button><i class="cap"></i>
  </div>
  <div class="bar"><i class="grip v"></i>
    <button class="b d pale" title="剪切"><svg><use href="#cut"/></svg></button><button class="b d pale" title="复制"><svg><use href="#cp2"/></svg></button><button class="b d" title="粘贴"><svg><use href="#pst"/></svg></button><button class="b d pale" title="撤销"><svg><use href="#undo"/></svg></button><button class="b d pale" title="重做"><svg><use href="#redo"/></svg></button><i class="cap"></i>
  </div>
  <div class="bar grow"><i class="grip v"></i>
    <span class="combo font"><svg><use href="#tf"/></svg><select aria-label="字体" disabled><option>默认: 宋体</option></select></span><span class="combo size"><select aria-label="字号" disabled><option>0</option></select></span>
    <button class="b t" title="粗体"><b>B</b></button><button class="b t" title="斜体"><b><i>I</i></b></button><button class="b t" title="下划线"><u>U</u></button><button class="b t s" title="上标">x<sup>2</sup></button><button class="b t s" title="下标">x<sub>2</sub></button><button class="b t s" title="上下标">x<span class="stack"><span>2</span><span>1</span></span></button><button class="b t s" title="希腊">αβ</button><button class="b t" title="增大">A<sup>▴</sup></button><button class="b t s" title="减小">A<sup>▾</sup></button><button class="b d dd" title="对齐"><svg><use href="#aln"/></svg></button><i class="fill"></i><i class="cap more"></i>
  </div>
  <div class="bar mini"><i class="grip v"></i><i class="fill"></i><i class="cap more"></i></div>
</div>

<main class="main">
  <aside class="docks"><button>项目管理器（1）</button><button>消息日志</button><button>提示日志</button></aside>
  <div class="tools left">
    <div class="vbar wide"><i class="grip h"></i>
      <button class="b on" title="指针"><svg><use href="#arrow"/></svg></button><button class="b d" title="放大"><svg><use href="#zin"/></svg></button><button class="b d" title="缩小"><svg><use href="#zout"/></svg></button><button class="b d" title="屏幕读取"><svg><use href="#plus"/></svg></button><button class="b dd" title="数据读取"><svg><use href="#target"/></svg></button><button class="b d" title="数据选择"><svg><use href="#ud"/></svg></button><button class="b d dd" title="遮盖"><svg><use href="#mask"/></svg></button><button class="b dd" title="绘制数据"><svg><use href="#draw"/></svg></button><button class="b d" title="点"><svg><use href="#dots"/></svg></button><button class="b" title="文本"><svg><use href="#tt"/></svg></button><button class="b dd" title="标注"><svg><use href="#ann"/></svg></button><button class="b dd" title="箭头"><svg><use href="#arr"/></svg></button><button class="b dd" title="直线"><svg><use href="#line"/></svg></button><button class="b dd" title="矩形"><svg><use href="#rect"/></svg></button><button class="b d dd" title="括号"><svg><use href="#brk"/></svg></button><button class="b" title="平移"><svg><use href="#hand"/></svg></button><button class="b dd" title="公式"><svg><use href="#sqrt"/></svg></button><button class="b dd" title="插入图"><svg><use href="#graph"/></svg></button><button class="b" title="缩放平移"><svg><use href="#hand2"/></svg></button><button class="b" title="旋转"><svg><use href="#rot"/></svg></button><i class="cap"></i>
    </div>
    <div class="vbar stretch"><i class="grip h"></i>
      <button class="b" title="颜色"><svg><use href="#cols"/></svg></button><button class="b d" title="气泡"><svg><use href="#rings"/></svg></button><button class="b d" title="误差"><svg><use href="#err"/></svg></button><button class="b" title="图例"><svg><use href="#lbl"/></svg></button><i class="fill"></i><i class="cap more"></i>
    </div>
    <div class="vbar low"><i class="grip h"></i><i class="fill"></i><i class="cap more"></i></div>
  </div>

  <section class="center">
    <div class="desk">
      <article class="gwin">
        <header><svg class="gicon" viewBox="0 0 20 20"><path d="M1 1H19V19H1Z" fill="#6e1f1f"/><path d="M1 1H17V17H1Z" fill="#d8d0c8"/><path d="M3 3H16V15H3Z" fill="#24c4c4"/><path d="M4 7L8 5H15M4 11L9 9H15M4 13H15" stroke="#123" fill="none"/></svg><h2>Graph1</h2>
          <button aria-label="最小化图"><svg viewBox="0 0 16 16"><path d="M1 8H15" stroke-width="3"/></svg></button><button aria-label="最大化图"><svg viewBox="0 0 16 16"><path d="M3 3H13V13H3Z" stroke-width="3"/></svg></button><button aria-label="关闭图"><svg viewBox="0 0 16 16"><path d="M2 2L14 14M14 2L2 14" stroke-width="3"/></svg></button></header>
        <div class="page">
          <svg class="chart" viewBox="87 217 719 510" preserveAspectRatio="xMinYMin meet" role="img" aria-label="3D柱状图">
            <g class="grid">
              <path d="M251 307L264 465M326 280L332 395M394 255L396 318M213 346L427 265L634 349M218 393L378 328M223 438L378 372M228 482L242 476M295 451L314 442M232 523L244 517"/>
              <path d="M442 249V300M473 262V304M506 275L504 368M541 288L538 356M577 302L575 346M616 317L613 352M475 330L540 357M616 391L630 397M613 437L625 443M609 480L621 486M605 521L618 528"/>
              <path d="M249 574L262 567M277 593L290 587M305 614L318 607M336 635L350 628M367 659L382 650M401 683L414 675M477 636L484 632M541 594L546 590"/>
            </g>
            <path class="axis" d="M427 300V243L211 322L235 563L419 695L613 567L637 325L427 243M235 563L249 557M613 567L601 561"/>
            <path class="axis" d="M249 574L245 576M277 593L273 595M305 614L301 616M336 635L331 638M367 659L363 661M401 683L396 685M263 583L260 584M291 603L288 605M321 624L318 626M351 647L348 649M384 670L381 672M419 695L415 697M235 563L231 565M457 671L461 673M523 627L527 629M584 586L588 588M490 648L493 650M555 606L558 608M419 695L422 697M634 349L638 351M630 397L634 398M625 443L629 444M621 486L625 488M618 528L622 530M613 567L617 569M632 373L635 374M628 420L631 421M623 464L626 465M619 507L622 508M616 548L619 549M637 325H640"/>
            <g class="bars3d">
              <g class="bl"><path class="l" d="M376 325L400 336L401 440L379 430Z"/><path class="r" d="M400 336L406 333V440H401Z"/><path class="t" d="M376 325L405 312L424 318L406 334L400 336Z"/></g>
              <g class="bl"><path class="l" d="M406 312L431 323V460H408Z"/><path class="r" d="M431 323L476 304V460H431Z"/><path class="t" d="M406 312L451 294L476 304L431 323Z"/></g>
              <g class="bl"><path class="l" d="M437 387L463 399V470H438Z"/><path class="r" d="M463 399L493 385V490H463Z"/><path class="t" d="M437 387L481 367L493 372L490 388L463 399Z"/></g>
              <g class="bl"><path class="l" d="M470 383L497 396L495 500H468Z"/><path class="r" d="M497 396L526 382V500H495Z"/><path class="t" d="M470 383L516 362L530 368V381L497 396Z"/></g>
              <g class="bl"><path class="l" d="M505 371L534 384L530 500H500Z"/><path class="r" d="M534 384L565 370V500H530Z"/><path class="t" d="M505 371L551 350L566 356V370L534 384Z"/></g>
              <g class="bl"><path class="l" d="M544 361L574 374L560 597L531 582Z"/><path class="r" d="M574 374L619 352L601 571L560 597Z"/><path class="t" d="M544 361L589 339L619 352L574 374Z"/></g>
              <g class="gr"><path class="l" d="M311 414L335 427L338 510L316 500Z"/><path class="r" d="M335 427L345 423V510H338Z"/><path class="t" d="M311 414L358 393L377 402L345 423L335 427Z"/></g>
              <g class="gr"><path class="l" d="M339 420L364 432L367 520H343Z"/><path class="r" d="M364 432L411 410V520H367Z"/><path class="t" d="M339 420L387 398L411 410L364 432Z"/></g>
              <g class="gr"><path class="l" d="M371 460L397 474V540H373Z"/><path class="r" d="M397 474L410 468V540H397Z"/><path class="t" d="M371 460L418 437L431 443L410 468L397 474Z"/></g>
              <g class="gr"><path class="l" d="M402 459L429 473V560H403Z"/><path class="r" d="M429 473L476 449V560H429Z"/><path class="t" d="M402 459L450 435L476 449L429 473Z"/></g>
              <g class="gr"><path class="l" d="M435 493L463 509V570H437Z"/><path class="r" d="M463 509L480 501V570H463Z"/><path class="t" d="M435 493L483 468L496 474L480 500L463 509Z"/></g>
              <g class="gr"><path class="l" d="M471 488L501 503L496 639L466 622Z"/><path class="r" d="M501 503L549 476L541 610L496 639Z"/><path class="t" d="M471 488L519 461L549 476L501 503Z"/></g>
              <g class="rd"><path class="l" d="M241 473L263 486L270 574L249 560Z"/><path class="r" d="M263 486L314 463V560L275 572L270 574Z"/><path class="t" d="M241 473L291 449L314 463L263 486Z"/></g>
              <g class="rd"><path class="l" d="M270 501L294 516L299 595L277 579Z"/><path class="r" d="M294 516L344 491L345 570L304 593L299 595Z"/><path class="t" d="M270 501L321 478L344 491L294 516Z"/></g>
              <g class="rd"><path class="l" d="M301 538L325 553L329 615L304 599Z"/><path class="r" d="M325 553L340 546V611L329 615Z"/><path class="t" d="M301 538L351 512L365 520L340 546L325 553Z"/></g>
              <g class="rd"><path class="l" d="M330 531L356 548L360 638L335 621Z"/><path class="r" d="M356 548L407 521V615L365 635L360 638Z"/><path class="t" d="M330 531L382 505L407 521L356 548Z"/></g>
              <g class="rd"><path class="l" d="M363 564L390 581L392 661L366 643Z"/><path class="r" d="M390 581L405 573V653L392 661Z"/><path class="t" d="M363 564L414 536L430 546L405 573L390 581Z"/></g>
              <g class="rd"><path class="l" d="M397 557L426 574L427 685L399 666Z"/><path class="r" d="M426 574L477 545L476 653L427 685Z"/><path class="t" d="M397 557L449 527L477 545L426 574Z"/></g>
            </g>
            <g class="lab">
              <text transform="translate(239 580) rotate(-50)">F</text><text transform="translate(268 601) rotate(-50)">E</text><text transform="translate(297 622) rotate(-50)">D</text><text transform="translate(328 645) rotate(-50)">C</text><text transform="translate(359 668) rotate(-50)">B</text><text transform="translate(393 692) rotate(-50)">A</text>
              <text class="ax" transform="translate(291 633) rotate(36)">产品</text>
              <text transform="translate(458 679) rotate(33)">2022年</text><text transform="translate(526 635) rotate(33)">2023年</text><text transform="translate(588 593) rotate(30)">2024年</text>
              <g class="z"><text transform="translate(640 358) rotate(12)">100</text><text transform="translate(635 404) rotate(12)">80</text><text transform="translate(630 450) rotate(12)">60</text><text transform="translate(626 494) rotate(12)">40</text><text transform="translate(623 535) rotate(12)">20</text><text transform="translate(619 575) rotate(12)">0</text><text transform="translate(654 485) rotate(-80)">2022年</text></g>
            </g>
            <g class="legend"><path d="M646.500 245.500H722.500V290.500H646.500Z" fill="#fff" stroke="#000"/><path d="M649.500 248.500H675.500V261.500H649.500Z" fill="#f00" stroke="#777"/><path d="M649.500 263.500H675.500V275.500H649.500Z" fill="#0f0" stroke="#777"/><path d="M649.500 277.500H675.500V290H649.500Z" fill="#00f" stroke="#777"/><text x="681" y="259">2022年</text><text x="681" y="273">2023年</text><text x="681" y="287">2024年</text></g>
            <path d="M297 366L328 389L335 381V409L315 402L321 397Z" fill="#ff3b3b"/>
            <text class="note" x="220" y="367">双击柱体</text>
          </svg>
          <span class="layer">1</span>
        </div>
      </article>
      <a class="feedback" href="#feedback">&gt;&gt;反馈</a>
    </div>
    <div class="row bottom">
      <div class="bar"><i class="grip v"></i>
        <button class="b d dd" title="折线"><svg><use href="#line"/></svg></button><button class="b d dd" title="散点"><svg><use href="#scat"/></svg></button><button class="b d dd" title="点线"><svg><use href="#lsc"/></svg></button><button class="b d dd" title="柱状"><svg><use href="#bars"/></svg></button><button class="b d dd" title="多图"><svg><use href="#gx"/></svg></button><button class="b d dd pale" title="误差棒"><svg><use href="#err"/></svg></button><button class="b d dd" title="面积"><svg><use href="#area"/></svg></button><button class="b d dd" title="极坐标"><svg><use href="#pol"/></svg></button><button class="b d dd" title="箱线"><svg><use href="#box"/></svg></button><button class="b d" title="模板库"><svg><use href="#film"/></svg></button><i class="cap"></i>
      </div>
      <div class="bar"><i class="grip v"></i>
        <button class="b d dd" title="3D柱状"><svg><use href="#cube"/></svg></button><i class="sep"></i><button class="b d dd" title="3D曲面"><svg><use href="#cubf"/></svg></button><button class="b d dd" title="3D散点"><svg><use href="#cubp"/></svg></button><button class="b d dd" title="网格"><svg><use href="#mesh"/></svg></button><button class="b d dd" title="热图"><svg><use href="#hm"/></svg></button><button class="b d" title="等高线"><svg><use href="#cont"/></svg></button><i class="cap"></i>
      </div>
      <div class="bar"><i class="grip v"></i>
        <button class="b d" title="遮罩点"><svg><use href="#msk"/></svg></button><button class="b d" title="取消遮罩"><svg><use href="#msk2"/></svg></button><i class="sep"></i><button class="b d" title="遮罩颜色"><svg><use href="#shd"/></svg></button><button class="b d" title="隐藏"><svg><use href="#dgr"/></svg></button><button class="b" title="交换"><svg><use href="#dgr2"/></svg></button><i class="sep"></i><button class="b" title="禁用"><svg><use href="#dgr3"/></svg></button><i class="cap"></i>
      </div>
      <div class="bar grow"><i class="grip v"></i>
        <button class="b" title="逆时针"><svg><use href="#r1"/></svg></button><button class="b" title="顺时针"><svg><use href="#r2"/></svg></button><button class="b" title="左倾"><svg><use href="#r3"/></svg></button><button class="b" title="右倾"><svg><use href="#r4"/></svg></button><button class="b" title="透视"><svg><use href="#r5"/></svg></button><i class="fill"></i><i class="cap more"></i>
      </div>
    </div>
  </section>

  <div class="tools right">
    <div class="vbar"><i class="grip h"></i>
      <button class="b on" title="抗锯齿"><svg><use href="#steps"/></svg></button><button class="b" title="重设刻度"><svg><use href="#ax1"/></svg></button><button class="b" title="X刻度"><svg><use href="#ax2"/></svg></button><button class="b" title="Y刻度"><svg><use href="#ax3"/></svg></button><button class="b d" title="交换XY"><svg><use href="#xy"/></svg></button><button class="b on" title="快速模式"><svg><use href="#jog"/></svg></button><i class="sep"></i><button class="b" title="图层1"><svg><use href="#l1"/></svg></button><button class="b" title="图层2"><svg><use href="#l2"/></svg></button><button class="b" title="图层3"><svg><use href="#l3"/></svg></button><button class="b" title="合并"><svg><use href="#win3"/></svg></button><i class="sep"></i><button class="b" title="左下轴"><svg><use href="#e1"/></svg></button><button class="b" title="上轴"><svg><use href="#e2"/></svg></button><button class="b" title="右轴"><svg><use href="#e3"/></svg></button><button class="b" title="四轴"><svg><use href="#e4"/></svg></button><button class="b" title="嵌入轴"><svg><use href="#e5"/></svg></button><button class="b" title="嵌入图"><svg><use href="#e6"/></svg></button><i class="cap"></i>
    </div>
    <div class="vbar wide stretch"><i class="grip h"></i>
      <button class="b d" title="左对齐"><svg><use href="#a1"/></svg></button><button class="b d" title="右对齐"><svg><use href="#a2"/></svg></button><i class="sep"></i><button class="b d" title="顶对齐"><svg><use href="#a3"/></svg></button><button class="b d" title="底对齐"><svg><use href="#a4"/></svg></button><i class="sep"></i><button class="b d" title="垂直居中"><svg><use href="#a5"/></svg></button><button class="b d" title="水平居中"><svg><use href="#a6"/></svg></button><i class="sep"></i><button class="b d" title="等宽"><svg><use href="#a7"/></svg></button><button class="b d" title="等高"><svg><use href="#a8"/></svg></button><i class="sep"></i><i class="fill"></i><i class="cap more"></i>
    </div>
  </div>

  <aside class="panels">
    <header class="ph"><h2>对象管理器</h2><button title="隐藏图"><svg><path d="M2.500 2V15.500H17"/><path d="M3 5L8 11L11 5L16 11M4 11L9 6L15 10" stroke="#f00"/></svg></button><button title="添加"><svg><path d="M1.500 2.500H16.500V11L12 16V11.500H1.500Z" fill="#fff" stroke="#0078d7"/><path d="M5 7H13M9 3V11" stroke="#f00" stroke-width="2"/></svg></button><button title="菜单" class="tri"></button><button title="固定面板"><svg><use href="#pn"/></svg></button><button title="关闭面板"><svg><use href="#x"/></svg></button></header>
    <div class="treebox">
      <ul class="tree">
        <li class="sel"><i class="tog"></i><svg class="fold" viewBox="0 0 20 16"><path d="M1 14V2H7L9 4H17V7" fill="#e0a93a" stroke="#a87818"/><path d="M1 15L5 6H19L15 15Z" fill="#f8d77c" stroke="#a87818"/></svg>Graph1</li>
        <li class="n1"><i class="tog"></i><label><input type="checkbox" checked>Layer1</label></li>
        <li class="n2"><i class="tog"></i><label><input type="checkbox" checked>g1</label></li>
        <li class="n3"><label><input type="checkbox" checked><i class="sw"></i><b>2022年</b></label></li>
      </ul>
      <div class="sb"><svg><use href="#chev"/></svg><i class="thumb"></i><i class="fill"></i><svg class="flip"><use href="#chev"/></svg></div>
    </div>
    <header class="ph apps"><h2>Apps</h2><button title="菜单" class="tri"></button><button title="固定面板"><svg><use href="#pn"/></svg></button><button title="关闭面板"><svg><use href="#x"/></svg></button></header>
    <div class="appbody">
      <div class="strip">
        <svg class="tabs" viewBox="0 0 32 228"><path d="M32 68L5 82V110L32 123V68Z" fill="#fff" stroke="none"/><path d="M31.500 0V68L5 82V110L32 123M20 118L5 125V167L32 182M20 176L5 182V211L32 225V500"/></svg>
        <button class="nav" title="第一个"><svg viewBox="0 0 9 9"><path d="M1 .5H8M1 7L4.500 3L8 7Z"/></svg></button><button class="nav" title="上一个"><svg viewBox="0 0 9 9"><path d="M1 6L4.500 2L8 6Z"/></svg></button><button class="nav" title="下一个"><svg viewBox="0 0 9 9"><path d="M1 2L4.500 6L8 2Z"/></svg></button><button class="nav" title="最后一个"><svg viewBox="0 0 9 9"><path d="M1 8H8M1 2L4.500 6L8 2Z"/></svg></button>
        <button class="tab cur">所有</button><button class="tab">连接器</button><button class="tab">统计</button>
      </div>
      <div class="list">
        <button class="appitem"><svg viewBox="0 0 40 40"><path d="M0 0H35V35H0Z" fill="#d9eef5"/><path d="M0 0H35V4H0Z" fill="#0e7cab"/><path d="M.5 4V34.500H34.500V4" fill="none" stroke="#5aa9c4"/><path d="M3 7H14V21H3Z" fill="#c4c4c4"/><path d="M17 12H32V20H17Z" fill="#f4f4f4" stroke="#ccc"/><path d="M17 8H32M3 25.500H14M3 30.500H14" stroke="#bbb" stroke-width="2" stroke-dasharray="6 1"/><circle cx="28.500" cy="28.500" r="11" fill="#3dbb3d"/><path d="M28.500 21.500V35.500M21.500 28.500H35.500" stroke="#fff" stroke-width="4"/></svg><span>添加App</span></button>
        <button class="appitem"><svg viewBox="0 0 40 40"><path d="M1 1H39V39H1Z" fill="#ffe6bd"/><path d="M3 21L7 11L10 19L13 15L16 5L20 16L23 19L28 10L32 17L34 15L38 21Z" fill="#f23b35"/><path d="M2 22H39M2 25H39" stroke="#f23b35" stroke-width="2"/><circle cx="21" cy="24" r="7.500" fill="#f77" stroke="#2c2438" stroke-width="4"/><path d="M27 30L33 36" stroke="#2c2438" stroke-width="5"/></svg><span>Theme Preview</span></button>
        <button class="appitem"><svg viewBox="0 0 40 40"><path d="M13 2L18 9L27 12L21 18L20 27L12 23L4 25L7 17L2 10L10 9Z" fill="#e8c53c" stroke="#c9a227"/><path d="M20 21L39 39" stroke="#3d4450" stroke-width="2"/><path d="M27 3L28 6L31 7L28 8L27 11L26 8L23 7L26 6ZM4 27L5 30L7 31L5 32L4 35L3 32L1 31L3 30Z" fill="#f5c842"/></svg><span>Stats Advisor</span></button>
        <button class="appitem"><svg viewBox="0 0 40 40"><path d="M1 1H39V39H1Z" fill="#28487c"/><path d="M16 9H25L17 32H7Z" fill="#eef4fb"/><path d="M8 11H17M7 14H16M6 17H15M5 20H14M4 23H13M3 26H12M2 29H11M2 32H11" stroke="#cfe0f2"/><path d="M21 33L26 9H39L38 14H31L30 19H36L35 24H29L27 33Z" fill="#9bcdfb"/></svg><span>Speedy Fit</span></button>
        <button class="appitem off"><svg viewBox="0 0 40 40"><path d="M0 0H40V40H0Z" fill="#a1c4ea"/><path d="M4 38V3M3 38.500H38M1 7L4 2L7 7ZM33 35L38 38L33 40" stroke="#fff" stroke-width="2" fill="#fff"/><path d="M5 36C22 34 32 28 36 5" fill="none" stroke="#f794c2" stroke-width="3"/><path d="M8 33H11V36H8ZM15 32H18V35H15ZM23 29H26V32H23ZM27 22H30V25H27ZM33 16H36V19H33ZM34 4H37V7H34Z" fill="#fff"/></svg><span>Simple Fit</span></button>
        <button class="appitem" title="Word"><svg viewBox="0 0 40 40"><path d="M20 5.500H37.500V35H20" fill="#fff" stroke="#1459a8" stroke-width="2"/><path d="M24 9.500H34M24 13.500H34M24 17.500H34" stroke="#1459a8"/><path d="M10 6L27 4V38L10 35Z" fill="#1459a8"/><path d="M13 13L16 22L18.500 14L21 22L24 13" fill="none" stroke="#fff" stroke-width="2"/></svg></button>
      </div>
      <div class="sb big"><svg><use href="#chev"/></svg><i class="thumb"></i><i class="fill"></i><svg class="flip"><use href="#chev"/></svg></div>
    </div>
  </aside>
</main>

<footer class="status"><div class="recent">&lt;&lt; <b>最近打开的文件</b> (Ctrl+F1)</div><span class="dash">--</span><span>AU : <b>开</b></span><span>Light Grids</span><span>1:[Book1]Sheet1!Col("2022<b>年</b>")[1:6]</span><span>23KB - [Graph1]1!</span><span><b>弧度</b></span><svg class="size-grip" viewBox="0 0 12 12"><path d="M9 1H11V3H9ZM5 5H7V7H5ZM9 5H11V7H9ZM1 9H3V11H1ZM5 9H7V11H5ZM9 9H11V11H9Z" fill="#b5b5b5"/></svg></footer>

<div class="mark"><div><span>我</span><span>爱</span><span>分</span><span>享</span><span>网</span></div><p>www.zhanshaoyi.com</p></div>
<svg class="clip" viewBox="0 0 42 42"><path d="M2 5H34V37H2Z" fill="#cfe3fb" fill-opacity=".8" stroke="#1f74e0" stroke-width="2"/><path d="M12 6V3H16C16 0 20 0 20 3H24V6Z" fill="#1f74e0"/><path d="M11 14A9 9 0 1 1 10 23M9 12V17H14M18 15V21L22 24" fill="none" stroke="#e8484f" stroke-width="2"/><circle cx="31" cy="31" r="8" fill="#1f74e0"/><circle cx="30" cy="30" r="4" fill="none" stroke="#fff" stroke-width="2"/><path d="M33 33L39 39" stroke="#1f74e0" stroke-width="4"/><path d="M33 33L36 36" stroke="#fff" stroke-width="2"/></svg>
</div>
</body>
</html>
```
FILE: styles.css
```css
* { box-sizing: border-box; }
body { margin: 0; font: 15px/20px "Noto Sans", "Noto Sans CJK SC", sans-serif; color: #000; }
button { font: inherit; color: inherit; background: none; border: 0; padding: 0; margin: 0; }
h1, h2, p, ul { margin: 0; padding: 0; font-weight: 400; list-style: none; }
.defs { position: absolute; width: 0; height: 0; }
.app { position: relative; display: flex; flex-direction: column; height: 100vh; background: #ecedfb; border: 1px solid #6d6d6d; overflow: hidden; }

.title { display: flex; align-items: center; height: 37px; padding-left: 9px; gap: 6px; background: #fff; }
.title h1 { flex: 1; font-size: 16px; white-space: nowrap; }
.title h1 span { font-size: 15px; }
.logo { width: 20px; height: 20px; }
.winbtns { display: flex; }
.winbtns button { width: 58px; height: 36px; display: grid; place-items: center; }
.winbtns svg { width: 14px; height: 14px; fill: none; stroke: #000; }

.menuarea { display: flex; height: 61px; padding-left: 2px; }
.menuarea > .grip { margin: 6px 2px; }
.menu { display: flex; gap: 22px; height: 31px; padding-left: 7px; align-items: center; font-size: 17px; white-space: nowrap; }
.menu small { font-size: 15px; }
.search { display: flex; align-items: center; margin: 2px 0 0 8px; width: 244px; height: 26px; border: 1px solid #999; border-radius: 5px; background: #fff; padding-left: 2px; }
.search svg { width: 20px; height: 20px; margin-right: 4px; }
.search input { border: 0; outline: 0; flex: 1; min-width: 0; font: inherit; font-size: 17px; background: none; padding: 0; }
.search input::placeholder { color: #222; opacity: 1; }

.grip { flex: none; }
.grip.v { width: 4px; margin: 6px 2px; background: repeating-linear-gradient(#a6a6a6 0 2px, transparent 2px 5px) no-repeat 0 0 / 2px 100%; }
.grip.h { height: 3px; width: 24px; margin: 3px 0 3px 5px; background: repeating-linear-gradient(90deg, #a6a6a6 0 2px, transparent 2px 4px) no-repeat 0 0 / 100% 2px; }
.vbar:not(.wide) .grip.h { width: 16px; }
.row { display: flex; height: 31px; padding-left: 1px; }
.bar { display: flex; align-items: center; height: 30px; padding-left: 1px; background: linear-gradient(#f6faff, #e9ebf6 45%, #b6b7cd 95%, #8d8eaa); border-radius: 3px 0 0 3px; }
.bar > .grip { align-self: stretch; }
.bar > .grip + * { margin-left: 1px; }
.grow { flex: 1; }
.mini { width: 40px; }
.fill { flex: 1; }
.b { flex: none; width: 22px; height: 22px; display: flex; align-items: center; justify-content: center; border: 1px solid transparent; color: #000; }
.b svg, .combo > svg { flex: none; width: 18px; height: 18px; fill: none; stroke: currentColor; shape-rendering: crispEdges; }
.b.d { color: #6a6e80; }
.b.pale { opacity: .6; }
.b.on { border-color: #0a7ad6; background: #cfe6f8; }
.b.dd { width: 31px; justify-content: flex-start; padding-left: 1px; }
.b.dd::after, .tri::after, .combo::after { content: ""; border: 3px solid transparent; border-top-color: #000; border-bottom: 0; margin-left: 2px; }
.sep { flex: none; width: 2px; height: 20px; margin: 0 3px; background: linear-gradient(90deg, #b4b5c8 50%, #fff 50%); }
.cap { flex: none; width: 12px; height: 29px; border-radius: 0 8px 0 0; background: linear-gradient(#a9aac6, #e4e5f3); position: relative; margin-left: 1px; align-self: flex-start; }
.cap::after { content: ""; position: absolute; right: 3px; bottom: 2px; width: 6px; height: 8px; background: #000; clip-path: polygon(0 0, 100% 0, 100% 20%, 0 20%, 0 50%, 100% 50%, 50% 100%, 0 50%); }
.cap.more::before { content: ""; position: absolute; left: 3px; top: 5px; width: 7px; height: 6px; background: #000; clip-path: polygon(0 0, 45% 50%, 55% 50%, 55% 0, 100% 50%, 55% 100%, 55% 50%, 45% 50%, 0 100%); }
.combo { position: relative; display: flex; align-items: center; height: 24px; background: #fff; margin: 0 3px; padding-right: 5px; }
.combo select { flex: 1; min-width: 0; appearance: none; border: 0; background: none; font: inherit; font-size: 16px; padding: 0 2px; color: #000; opacity: 1; }
.zoom { width: 72px; }
.font, .size { background: #f0f0f0; border: 1px solid #aaa; }
.font { width: 159px; padding-left: 6px; }
.size { width: 74px; margin-left: 2px; }
.font select, .size select { color: #858585; }
.font select { font-size: 17px; }
.combo.font::after, .combo.size::after { border-top-color: #777; }
.b.t { display: block; font: 700 18px/20px "Liberation Serif", "DejaVu Serif", serif; color: #656a7c; text-align: center; white-space: nowrap; }
.b.t.s { font-size: 15px; }
.b.t sup, .b.t sub { font-size: 9px; font-weight: 400; line-height: 0; }
.stack { display: inline-flex; flex-direction: column; font-size: 9px; line-height: 8px; font-weight: 400; vertical-align: middle; }

.main { flex: 1; min-height: 0; display: grid; grid-template-columns: 26px 36px minmax(0, 1fr) 39px 192px; }
.docks { display: flex; flex-direction: column; align-items: flex-start; gap: 14px; }
.docks button { writing-mode: vertical-rl; text-orientation: sideways; background: #f0f0f0; border: 1px solid #d9d9d9; border-width: 0 1px 1px 0; color: #6c6c6c; font-size: 17px; line-height: 23px; padding: 5px 0 10px; text-align: start; width: 24px; min-height: 95px; flex: none; }
.docks button:first-child { height: 152px; }
.tools { display: flex; flex-direction: column; min-height: 0; }
.tools .cap { width: auto; height: 12px; align-self: stretch; margin: 1px 0 0; border-radius: 0 0 6px 0; background: linear-gradient(90deg, #dfe1ef, #b4b5cb); }
.tools .cap::after { inset: 2px 4px auto auto; width: 7px; height: 8px; clip-path: polygon(0 0, 20% 0, 20% 50%, 40% 50%, 40% 0, 100% 50%, 40% 100%, 40% 50%, 20% 50%, 20% 100%, 0 100%); }
.tools .cap.more::before { left: 6px; top: 3px; width: 5px; height: 7px; clip-path: polygon(0 0, 100% 0, 50% 50%, 100% 60%, 50% 100%, 0 60%, 50% 50%); }
.vbar { display: flex; flex-direction: column; align-items: flex-start; width: 25px; background: linear-gradient(90deg, #f6faff, #e3e5f1 45%, #aeafc6); border-radius: 3px 3px 0 0; flex: none; }
.vbar.wide { width: 34px; }
.vbar .b { height: 22px; margin: 0 0 1px 2px; }
.vbar .b.dd { width: 30px; }
.vbar .sep { width: 18px; height: 2px; margin: 3px 4px; background: #b8b9c6; }
.vbar.stretch { flex: 1; }
.low { height: 40px; }

.center { display: flex; flex-direction: column; min-width: 0; }
.desk { flex: 1; min-height: 0; display: flex; flex-direction: column; background: #ababab; border: 1px solid #777; border-width: 2px 0 0 1px; padding: 15px 16px 0 13px; }
.gwin { flex: 1; min-height: 0; display: flex; flex-direction: column; margin-right: 34px; background: #588bd6; border: 1px solid #47607f; border-radius: 7px 7px 0 0; padding: 0 8px 8px; }
.gwin header { display: flex; align-items: center; height: 37px; padding-top: 2px; }
.gicon { width: 20px; height: 20px; margin: 0 4px 0 1px; }
.gwin h2 { flex: 1; font-size: 15px; padding-top: 2px; }
.gwin header button { width: 45px; height: 30px; padding-bottom: 6px; display: grid; place-items: center; }
.gwin header button:last-child { width: 37px; padding-left: 8px; }
.gwin button svg { width: 16px; height: 16px; fill: none; stroke: #000; }
.page { position: relative; flex: 1; min-height: 0; display: flex; border: 1px solid #777; border-right-color: #fff; border-bottom-color: #fff; background: #c0c0c0; }
.chart { display: block; width: 100%; max-width: 719px; background: #fff; }
.layer { position: absolute; left: 0; top: 0; width: 25px; height: 25px; background: #6199cb; border-right: 1px solid #8ab; color: #fff; font: bold 20px/24px "Liberation Sans", sans-serif; text-align: center; }
.feedback { flex: none; align-self: flex-end; height: 42px; padding-top: 7px; font-size: 21px; line-height: 20px; color: #0c63c0; }
.grid path { fill: none; stroke: #d0d0d0; }
.axis { fill: none; stroke: #000; }
.bars3d path { stroke: #858585; stroke-linejoin: round; }
.bl .l { fill: #00f; } .bl .r { fill: #0000a0; } .bl .t { fill: #0000c0; }
.gr .l { fill: #0f0; } .gr .r { fill: #00a000; } .gr .t { fill: #00c400; }
.rd .l { fill: #f00; } .rd .r { fill: #a20000; } .rd .t { fill: #c40000; }
.lab, .legend { font: 10px "Liberation Serif", "Noto Sans CJK SC", serif; fill: #222; }
.lab .z { font-size: 11px; }
.lab .ax { font-size: 11px; }
.legend { font-size: 13px; }
.note { font: bold 20px "Noto Sans CJK SC", sans-serif; fill: #f01820; }
.bottom { height: 34px; padding: 2px 0 0; }

.panels { display: flex; flex-direction: column; min-height: 0; min-width: 0; }
.ph { flex: none; display: flex; align-items: center; height: 31px; padding: 0 1px 0 3px; background: linear-gradient(#bccbdc, #dce8f3); }
.ph h2 { flex: 1; font-size: 17px; white-space: nowrap; }
.ph.apps h2 { font-size: 15px; }
.ph button { width: 17px; height: 22px; display: grid; place-items: center; }
.ph button svg { width: 18px; height: 18px; fill: none; stroke: #000; shape-rendering: crispEdges; overflow: hidden; }
.ph:not(.apps) button:nth-of-type(-n+2) { width: 20px; }
.ph .tri::after { border-width: 5px 5px 0; margin: 0; }
.treebox { flex: none; height: 88px; display: flex; border: 2px solid #666; border-right-width: 3px; background: #fff; overflow: hidden; margin-bottom: 4px; }
.tree { flex: 1; min-width: 0; overflow: hidden; font: 14px/22px Roboto, "Noto Sans CJK SC", sans-serif; }
.tree li { position: relative; display: flex; align-items: center; height: 22px; padding-left: 2px; white-space: nowrap; }
.tree .sel { background: #0078d7; color: #fff; outline: 1px dotted #f6b35a; outline-offset: -1px; }
.tree .n1 { padding-left: 18px; } .tree .n2 { padding-left: 34px; } .tree .n3 { padding-left: 65px; }
.tree li:not(.sel)::before { content: ""; position: absolute; left: 8px; top: 0; width: 10px; height: 11px; border: dotted #aaa; border-width: 0 0 1px 1px; }
.tree li.n2::before { left: 24px; } .tree li.n3::before { left: 40px; }
.tree label { display: flex; align-items: center; }
.tog { width: 12px; height: 12px; border: 1px solid #999; margin-right: 3px; background: linear-gradient(#3a55a8, #3a55a8) center / 8px 2px no-repeat #eef1fa; flex: none; }
.fold { width: 20px; height: 16px; margin-right: 3px; }
.tree input { appearance: none; width: 17px; height: 17px; margin: 0 3px 0 0; border: 1px solid #222; background: #fff; display: grid; place-items: center; }
.tree input:checked::after { content: ""; width: 10px; height: 5px; border: solid #333; border-width: 0 0 2px 2px; transform: rotate(-45deg); margin-bottom: 4px; }
.sw { width: 42px; height: 14px; background: #f00; border: 1px solid #900; margin-right: 4px; }
.sb { flex: none; width: 20px; background: #f0f0f0; display: flex; flex-direction: column; align-items: center; padding: 1px 0; }
.sb svg { width: 18px; height: 18px; fill: none; flex: none; }
.flip { transform: rotate(180deg); }
.thumb { width: 18px; height: 28px; background: #cdcdcd; flex: none; margin-top: 2px; }
.big { margin-right: 3px; padding: 4px 0; }
.big .thumb { height: 211px; }
.appbody { flex: 1; min-height: 0; display: flex; background: #f0f0f0; border-bottom: 1px solid #888; }
.strip { position: relative; flex: none; width: 32px; display: flex; flex-direction: column; align-items: center; }
.tabs { position: absolute; left: 0; top: 0; width: 32px; height: 228px; overflow: visible; fill: none; stroke: #666; }
.nav { position: relative; height: 17px; width: 20px; display: grid; place-items: center; }
.nav svg { width: 9px; height: 9px; fill: #000; stroke: #000; }
.tab { position: relative; writing-mode: vertical-rl; text-orientation: sideways; font-size: 15px; line-height: 26px; height: 52px; text-align: center; }
.tab.cur { font-weight: 700; margin-top: 3px; }
.list { flex: 1; min-width: 0; background: #fff; overflow: hidden; padding-top: 5px; border-top: 1px solid #bbb; }
.appitem { display: flex; flex-direction: column; align-items: center; width: 94px; height: 94px; line-height: 20px; gap: 3px; }
.appitem span { max-width: 86px; }
.appitem svg { width: 40px; height: 40px; flex: none; }
.off { color: #858585; }

.status { flex: none; display: flex; align-items: center; height: 28px; margin-top: 1px; background: #f0f0f0; border-top: 1px solid #d0d0d0; padding-left: 46px; white-space: nowrap; }
.status span { padding: 0 4px; border-left: 1px solid #cfcfcf; line-height: 24px; }
.status b { font-weight: 400; font-size: 17px; }
.status .dash { border-right: 1px solid #cfcfcf; padding: 0 5px; margin-right: 5px; }
.status .recent { flex: 1; min-width: 0; overflow: hidden; }
.size-grip { width: 12px; height: 12px; margin: 6px 2px 0 10px; }
.mark { position: absolute; left: 515px; top: 123px; color: #ee1c24; pointer-events: none; }
.mark div { display: flex; gap: 14px; font: bold 22px/26px "Noto Sans CJK SC", sans-serif; }
.mark p { font: bold 18px/20px "Liberation Serif", serif; margin-top: 8px; }
.clip { position: absolute; left: 3px; bottom: 0; width: 42px; height: 42px; }
```
